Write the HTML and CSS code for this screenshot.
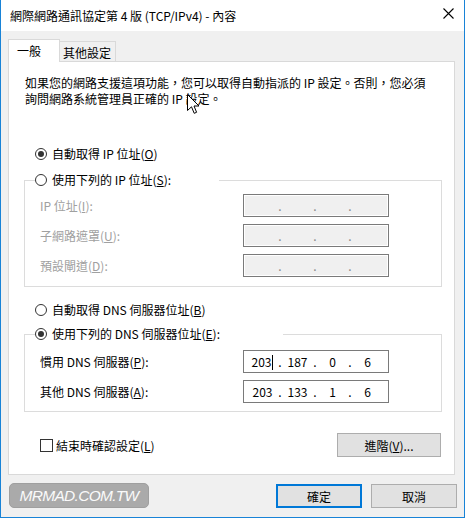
FILE: index.html
```html
<!DOCTYPE html>
<html lang="zh-Hant">
<head>
  <meta charset="UTF-8">
  <title>網際網路通訊協定第 4 版 (TCP/IPv4) - 內容</title>
  <link rel="stylesheet" href="styles.css">
</head>
<body>
  <div class="window">
    <div class="titlebar">
      <span class="title">網際網路通訊協定第 4 版 (TCP/IPv4) - 內容</span>
      <svg class="close" width="11" height="11" viewBox="0 0 11 11">
        <path d="M0.5 0.5 L10.5 10.5 M10.5 0.5 L0.5 10.5" stroke="#000" stroke-width="1.1" fill="none"/>
      </svg>
    </div>

    <div class="content">
      <div class="tabs">
        <div class="tab active">一般</div>
        <div class="tab">其他設定</div>
      </div>

      <div class="panel">
        <p class="intro">如果您的網路支援這項功能，您可以取得自動指派的 IP 設定。否則，您必須<br>詢問網路系統管理員正確的 IP 設定。</p>

        <div class="opt first">
          <span class="radio on"></span>
          <span>自動取得 IP 位址(<u>O</u>)</span>
        </div>

        <fieldset class="group ip">
          <legend class="opt">
            <span class="radio"></span>
            <span>使用下列的 IP 位址(<u>S</u>):</span>
          </legend>
          <div class="rows">
            <label class="off">IP 位址(<u>I</u>):</label>
            <div class="ipbox disabled"><span class="seg"></span><span class="dot">.</span><span class="seg"></span><span class="dot">.</span><span class="seg"></span><span class="dot">.</span><span class="seg"></span></div>
            <label class="off">子網路遮罩(<u>U</u>):</label>
            <div class="ipbox disabled"><span class="seg"></span><span class="dot">.</span><span class="seg"></span><span class="dot">.</span><span class="seg"></span><span class="dot">.</span><span class="seg"></span></div>
            <label class="off">預設閘道(<u>D</u>):</label>
            <div class="ipbox disabled"><span class="seg"></span><span class="dot">.</span><span class="seg"></span><span class="dot">.</span><span class="seg"></span><span class="dot">.</span><span class="seg"></span></div>
          </div>
        </fieldset>

        <div class="opt dns-auto">
          <span class="radio"></span>
          <span>自動取得 DNS 伺服器位址(<u>B</u>)</span>
        </div>

        <fieldset class="group dns">
          <legend class="opt">
            <span class="radio on"></span>
            <span>使用下列的 DNS 伺服器位址(<u>E</u>):</span>
          </legend>
          <div class="rows">
            <label>慣用 DNS 伺服器(<u>P</u>):</label>
            <div class="ipbox"><span class="seg">203<span class="caret"></span></span><span class="dot">.</span><span class="seg">187</span><span class="dot">.</span><span class="seg">0</span><span class="dot">.</span><span class="seg">6</span></div>
            <label>其他 DNS 伺服器(<u>A</u>):</label>
            <div class="ipbox"><span class="seg">203</span><span class="dot">.</span><span class="seg">133</span><span class="dot">.</span><span class="seg">1</span><span class="dot">.</span><span class="seg">6</span></div>
          </div>
        </fieldset>

        <div class="bottom">
          <div class="check">
            <span class="box"></span>
            <span>結束時確認設定(<u>L</u>)</span>
          </div>
          <button class="btn adv">進階(<u>V</u>)...</button>
        </div>
      </div>

      <div class="footer">
        <div class="mark">MRMAD.COM.TW</div>
        <button class="btn ok">確定</button>
        <button class="btn">取消</button>
      </div>
    </div>

    <svg class="cursor" width="13" height="21" viewBox="0 0 13 21">
      <path d="M0.5 0.5 L0.5 16.5 L4.5 12.8 L7.2 19.3 L9.6 18.3 L7 12 L12 12 Z" fill="#fff" stroke="#000" stroke-width="1"/>
    </svg>
  </div>
</body>
</html>
```

FILE: styles.css
```css
* {
  box-sizing: border-box;
}
body {
  margin: 0;
  font-family: "Noto Sans CJK TC", sans-serif;
  font-size: 12px;
  color: #000;
}
.window {
  position: relative;
  width: 465px;
  height: 518px;
  display: flex;
  flex-direction: column;
  background: #f0f0f0;
  border: 1px solid #1883d7;
  border-top: none;
}
.titlebar {
  height: 31px;
  flex: none;
  background: #fff;
  display: flex;
  align-items: center;
  justify-content: space-between;
  padding: 0 9px 1px 9px;
}
.close {
  margin-right: 1px;
  margin-top: -3px;
}
.content {
  padding: 8px 9px 0 7px;
}
.tabs {
  display: flex;
  align-items: flex-end;
  height: 23px;
  margin-bottom: -1px;
}
.tab {
  height: 21px;
  width: 56px;
  display: flex;
  align-items: center;
  padding-left: 3px;
  padding-top: 1px;
  background: #f0f0f0;
  border: 1px solid #d9d9d9;
  border-left: none;
}
.tab.active {
  position: relative;
  z-index: 1;
  height: 23px;
  width: 52px;
  padding-left: 8px;
  padding-top: 0;
  padding-bottom: 1px;
  background: #fff;
  border-left: 1px solid #d9d9d9;
  border-bottom: none;
}
.panel {
  background: #fff;
  border: 1px solid #d9d9d9;
  padding: 13px 12px 17px 15px;
}
.intro {
  margin: 0 0 0 1px;
  line-height: 16px;
}
.opt {
  display: flex;
  align-items: center;
  gap: 5px;
  height: 16px;
  line-height: 16px;
}
.opt.first {
  margin: 39px 0 0 11px;
}
.opt.dns-auto {
  margin: 15px 0 0 11px;
}
.radio {
  width: 12px;
  height: 12px;
  flex: none;
  border: 1px solid #333;
  border-radius: 50%;
  background: #fff;
  display: flex;
  align-items: center;
  justify-content: center;
}
.radio.on::after {
  content: "";
  width: 6px;
  height: 6px;
  border-radius: 50%;
  background: #333;
}
.group {
  margin: 10px 0 0 0;
  padding: 6px 0 9px 15px;
  border: 1px solid #dcdcdc;
  min-width: 0;
}
.group.dns {
  margin-top: 8px;
  padding-top: 8px;
  padding-bottom: 8px;
}
.group legend {
  padding: 0;
  margin-left: -5px;
  width: 184px;
}
.group.dns legend {
  width: 248px;
}
.rows {
  display: grid;
  grid-template-columns: 203px 146px;
  row-gap: 7px;
  align-items: center;
}
.rows label {
  line-height: 16px;
}
.rows label.off {
  color: #a0a0a0;
}
.ipbox {
  height: 23px;
  border: 1px solid #7a7a7a;
  background: #fff;
  display: flex;
  padding-left: 7px;
  line-height: 21px;
}
.ipbox.disabled {
  background: #f0f0f0;
  box-shadow: inset 0 0 0 1px #fff;
  color: #888;
}
.seg {
  width: 23px;
  text-align: center;
  white-space: nowrap;
}
.dot {
  width: 12px;
  text-align: center;
}
.caret {
  display: inline-block;
  width: 1px;
  height: 15px;
  background: #000;
  vertical-align: -3px;
  margin-left: 1px;
}
.bottom {
  display: flex;
  align-items: center;
  justify-content: space-between;
  margin-top: 21px;
  padding: 0 1px 0 16px;
}
.check {
  display: flex;
  align-items: center;
  gap: 3px;
}
.box {
  width: 13px;
  height: 13px;
  border: 1px solid #333;
  background: #fff;
}
.btn {
  font: inherit;
  color: #000;
  height: 24px;
  width: 86px;
  padding: 0;
  background: #e1e1e1;
  border: 1px solid #adadad;
}
.btn.adv {
  width: 104px;
}
.btn.ok {
  border: 2px solid #0078d7;
}
.footer {
  display: flex;
  align-items: center;
  gap: 9px;
  margin-top: 9px;
  margin-right: -2px;
}
.mark {
  margin-right: auto;
  margin-left: 1px;
  margin-top: -2px;
  width: 140px;
  height: 25px;
  border-radius: 5px;
  background: #aaa;
  border: 1px solid #9f9f9f;
  color: #fafafa;
  font-family: "Liberation Sans", sans-serif;
  font-style: italic;
  font-size: 15.5px;
  letter-spacing: -0.7px;
  line-height: 23px;
  text-align: center;
}
.cursor {
  position: absolute;
  left: 186px;
  top: 94px;
}
```
